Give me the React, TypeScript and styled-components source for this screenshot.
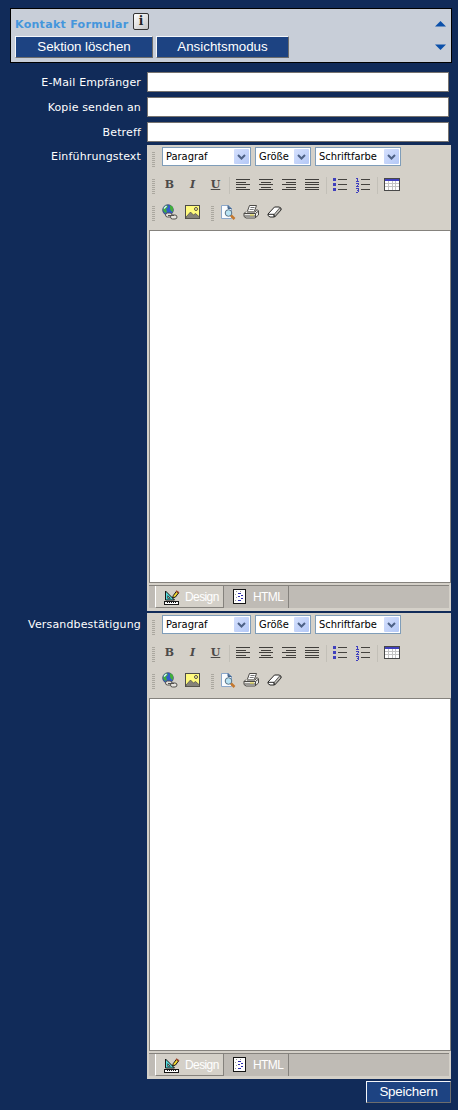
import React from 'react';
import styled, { createGlobalStyle } from 'styled-components';

const Global = createGlobalStyle`
  * { box-sizing: border-box; }
  body { margin: 0; background: #112b59; font-family: 'DejaVu Sans', Verdana, sans-serif; }
`;

const Page = styled.main`
  width: 458px;
  height: 1110px;
  padding: 8px 6px 0 10px;
  background: #112b59;
  overflow: hidden;
`;

const Header = styled.header`
  display: flex;
  justify-content: space-between;
  width: 442px;
  height: 55px;
  padding: 3px 5px 4px 4px;
  border: 1px solid #000;
  background: #c8ced8;
`;

const TitleRow = styled.div`
  display: flex;
  height: 24px;
  align-items: flex-start;
  gap: 4px;
`;

const Title = styled.h1`
  width: 114px;
  margin: 0;
  padding-top: 6px;
  color: #4596dc;
  font-size: 11px;
  line-height: 13px;
  font-weight: bold;
  letter-spacing: 0.3px;
  white-space: nowrap;
`;

const Info = styled.span`
  width: 16px;
  height: 17px;
  margin-top: 1px;
  border: 1px solid #333;
  border-radius: 2px;
  background: linear-gradient(135deg, #fff, #c4c4c4);
  color: #222;
  font: bold 12px/14px 'DejaVu Serif', serif;
  text-align: center;
`;

const Buttons = styled.div`
  display: flex;
  gap: 3px;
`;

const Button = styled.button<{ $width: number; $spacing?: number }>`
  width: ${p => p.$width}px;
  height: 22px;
  padding: 0;
  border: 1px solid;
  border-color: #f4f6fa #6d6d6d #6d6d6d #f4f6fa;
  background: #1d4382;
  color: #fff;
  font: 13.33px/18px 'Liberation Sans', Arial, sans-serif;
  letter-spacing: ${p => p.$spacing ?? 0}px;
  white-space: nowrap;
`;

const Arrows = styled.div`
  display: flex;
  flex-direction: column;
  justify-content: space-between;
  padding: 9px 0 8px;
`;

const Form = styled.form`
  padding-top: 9px;
`;

const Row = styled.div<{ $height: number }>`
  display: flex;
  height: ${p => p.$height}px;
`;

const Label = styled.label<{ $top: number }>`
  width: 131px;
  margin-right: 6px;
  padding-top: ${p => p.$top}px;
  color: #fff;
  font-size: 11px;
  line-height: 13px;
  letter-spacing: 0.15px;
  text-align: right;
  white-space: nowrap;
`;

const Input = styled.input`
  width: 302px;
  height: 20px;
  border: 1px solid #77736f;
  background: #fff;
`;

const Editor = styled.section`
  width: 304px;
  height: 466px;
  padding: 0 0 2px 2px;
  background: #d4d0c8;
`;

const Bar = styled.div<{ $height: number; $top: number }>`
  display: flex;
  align-items: flex-start;
  height: ${p => p.$height}px;
  padding: ${p => p.$top}px 0 0 3px;
`;

const Grip = styled.i<{ $top?: number; $right?: number }>`
  width: 3px;
  height: 15px;
  margin: ${p => p.$top ?? 0}px ${p => p.$right ?? 7}px 0 0;
  background: repeating-linear-gradient(#aaa79f 0 1px, transparent 1px 2px);
`;

const Select = styled.div<{ $width: number; $gap?: number }>`
  display: flex;
  justify-content: space-between;
  width: ${p => p.$width}px;
  height: 19px;
  margin-right: ${p => p.$gap ?? 0}px;
  padding: 1px 1px 1px 3px;
  border: 1px solid #7f9db9;
  background: #fff;
  color: #000;
  font: 11px/16px 'DejaVu Sans Condensed', Tahoma, sans-serif;
  white-space: nowrap;
`;

const Drop = styled.span`
  display: grid;
  place-items: center;
  width: 15px;
  height: 15px;
  border-radius: 1px;
  background: linear-gradient(135deg, #d5e0fd, #b4c8f6);
`;

const Glyph = styled.span<{ $gap: number; $italic?: boolean; $underline?: boolean }>`
  width: 11px;
  height: 14px;
  margin-right: ${p => p.$gap}px;
  padding-top: 1px;
  color: #4c4a48;
  font: ${p => (p.$italic ? 'italic' : 'normal')} bold 11px/14px 'DejaVu Serif', serif;
  text-decoration: ${p => (p.$underline ? 'underline' : 'none')};
  text-align: center;
`;

const Icon = styled.svg<{ $gap?: number; $top?: number }>`
  display: block;
  flex: none;
  margin-top: ${p => p.$top ?? 0}px;
  margin-right: ${p => p.$gap ?? 0}px;
`;

const Rule = styled.i<{ $gap: number }>`
  width: 1px;
  height: 17px;
  margin-right: ${p => p.$gap}px;
  background: #c3c0b8;
`;

const Canvas = styled.div`
  width: 302px;
  height: 353px;
  border: 1px solid #85827d;
  background: #fff;
`;

const Tabs = styled.div`
  display: flex;
  width: 300px;
  height: 23px;
  margin-top: 2px;
  padding-left: 6px;
  border-top: 1px solid #85827d;
  background: #bfbbb5;
`;

const Tab = styled.div<{ $active?: boolean; $width: number }>`
  display: flex;
  width: ${p => p.$width}px;
  height: 22px;
  padding: 3px 0 0 ${p => (p.$active ? 8 : 9)}px;
  border: solid #85827d;
  border-width: 0 1px ${p => (p.$active ? 1 : 0)}px ${p => (p.$active ? 1 : 0)}px;
  border-left-color: #fff;
  background: ${p => (p.$active ? '#d4d0c8' : '#bfbbb5')};
  color: #fff;
  font: 12px/17px 'Liberation Sans', Arial, sans-serif;
  letter-spacing: -0.6px;
`;

const Footer = styled.footer`
  display: flex;
  justify-content: flex-end;
  width: 441px;
`;

function AlignIcon({ kind, gap }: { kind: 'left' | 'center' | 'right' | 'full'; gap: number }) {
  return (
    <Icon width="14" height="12" $gap={gap} $top={2} shapeRendering="crispEdges">
      {[0, 3, 5, 8, 10].map((y, i) => {
        const w = kind === 'full' || i % 2 === 0 ? 14 : 10;
        const x = kind === 'center' ? (14 - w) / 2 : kind === 'right' ? 14 - w : 0;
        return <rect key={y} x={x} y={y} width={w} height="1" fill="#403e3b" />;
      })}
    </Icon>
  );
}

function ListIcon({ numbered, gap }: { numbered?: boolean; gap: number }) {
  return (
    <Icon width="16" height="16" $gap={gap} shapeRendering="crispEdges">
      {[0, 1, 2].map(i => (
        <React.Fragment key={i}>
          {!numbered && <rect x="1" y={1 + i * 5} width="3" height="3" fill="#4040bd" />}
          <rect x="6" y={2 + i * 5} width="9" height="1" fill="#45433f" />
        </React.Fragment>
      ))}
      {numbered && (
        <path d="M1 1.5h1M2.5 1v3M1 4.5h3M1 6.5h2M3.5 6v2M2 8.5h1M1 9.5h3M1 11.5h2M3.5 11v2M2 13.5h1M3.5 13v2M1 15.5h2" fill="none" stroke="#4040bd" />
      )}
    </Icon>
  );
}

function TableIcon() {
  return (
    <Icon width="16" height="13" $top={1} shapeRendering="crispEdges">
      <rect width="16" height="13" fill="#484848" />
      <rect x="1" y="1" width="14" height="2" fill="#4040bd" />
      <rect x="1" y="3" width="14" height="9" fill="#fff" />
      <path d="M1 5.5h14M1 8.5h14M4.5 3v9M8.5 3v9M11.5 3v9" stroke="#c4c4c4" />
    </Icon>
  );
}

function LinkIcon() {
  return (
    <Icon width="16" height="16" $gap={7}>
      <circle cx="6" cy="6" r="5.3" fill="#315bcc" stroke="#3b4770" strokeWidth=".8" />
      <path d="M2 3 5 1 6 3 4 5 5 8 3 9 1 6ZM8 1l3 2v5L9 7 8 5Z" fill="#42ae3c" />
      <path d="M2 4.5 4.5 2" stroke="#d8f4ff" strokeWidth="1.5" />
      <rect x="3.5" y="9" width="6.5" height="4" rx="2" fill="#e6e4df" stroke="#54524e" />
      <rect x="8.5" y="11" width="6.5" height="4" rx="2" fill="#e6e4df" stroke="#54524e" />
      <path d="M6 11.5h6" stroke="#54524e" />
    </Icon>
  );
}

function ImageIcon() {
  return (
    <Icon width="16" height="15" $gap={10} $top={1}>
      <rect x=".5" y=".5" width="14" height="13" fill="#fffa7d" stroke="#4c4b48" />
      <circle cx="11" cy="4" r="1.5" fill="#fff6b0" stroke="#55513b" />
      <path d="m1 12 4.5-5 3 3 2-1.5 4 3.5v1.5H1Z" fill="#858279" stroke="#4e4c45" strokeWidth=".7" />
    </Icon>
  );
}

function PreviewIcon() {
  return (
    <Icon width="16" height="16" $gap={7} $top={1}>
      <path d="M1.5.5h7l3 3v10h-10Z" fill="#fafcff" stroke="#8ba7ca" />
      <path d="M8 .5v3h3.5" fill="#58799f" stroke="#426289" />
      <circle cx="8.5" cy="8" r="3.3" fill="#b9e3f3" stroke="#5a7285" />
      <path d="m11 10.5 3.5 3.5" stroke="#c4782e" strokeWidth="2.5" />
    </Icon>
  );
}

function PrintIcon() {
  return (
    <Icon width="17" height="16" $gap={7}>
      <path d="m4.5 7 2-5.5h7l-2 5.5" fill="#fff" stroke="#4b4945" />
      <path d="M7.5 3.5h4M6.7 5.5h4" stroke="#777" />
      <path d="m3 7.5-2 2v3l2 1.5h9l3.5-3V7l-1.5-1.5L12 8H4" fill="#ecebe7" stroke="#4b4945" />
      <path d="M1 9.5h11.5l3-2.5M1.5 12h11.5M12.5 9.5V14" fill="none" stroke="#4b4945" />
      <path d="M7 11h4" stroke="#e4d538" />
    </Icon>
  );
}

function EraserIcon() {
  return (
    <Icon width="16" height="14" $top={1}>
      <path d="m1 9 6.5-7h5L14 3.5V5l-6.5 7H3L1 10.5Z" fill="#fff" stroke="#272625" />
      <path d="m7 9.5 6-7L14 5l-6.5 7Z" fill="#bdbbb5" stroke="#272625" strokeWidth=".7" />
      <path d="M1 9.3h6V12" fill="none" stroke="#272625" />
    </Icon>
  );
}

function DesignIcon() {
  return (
    <Icon width="16" height="16" $gap={5} $top={1}>
      <path d="M1.5 1v9h9Z" fill="#55ddde" stroke="#151515" />
      <path d="M3.7 5.7v2.6h2.6Z" fill="#d4d0c8" stroke="#151515" strokeWidth=".7" />
      <path d="m8.5 8 .8-2.5 3-4 2.2 1.5-3 4Z" fill="#f2d831" stroke="#151515" />
      <path d="m12 .8 3 2" stroke="#9a442b" strokeWidth="1.5" />
      <rect x=".5" y="11.5" width="14" height="3" fill="#fff" stroke="#151515" />
      <path d="M3.5 11v2M5.5 11v2M7.5 11v2M9.5 11v2M11.5 11v2" stroke="#151515" />
    </Icon>
  );
}

function CodeIcon() {
  return (
    <Icon width="14" height="16" $gap={6} shapeRendering="crispEdges">
      <rect x=".5" y=".5" width="12" height="14" fill="#fff" stroke="#151515" />
      <path d="M5 4.5h3M8 6.5h2M5 7.5h2M8 9.5h2M5 11.5h3" stroke="#2c2cae" />
      <path d="M3 2.5h1M7 2.5h1M2 5.5h1M3 8.5h1M2 11.5h1" stroke="#999" />
    </Icon>
  );
}

function DropDown({ text, width, gap }: { text: string; width: number; gap?: number }) {
  return (
    <Select $width={width} $gap={gap}>
      {text}
      <Drop>
        <svg width="9" height="6"><path d="m1 1 3.5 3.5L8 1" fill="none" stroke="#4d6185" strokeWidth="2" /></svg>
      </Drop>
    </Select>
  );
}

function RichEditor() {
  return (
    <Editor>
      <Bar $height={31} $top={2}>
        <Grip $top={5} />
        <DropDown text="Paragraf" width={89} gap={4} />
        <DropDown text="Größe" width={56} gap={4} />
        <DropDown text="Schriftfarbe" width={86} />
      </Bar>
      <Bar $height={28} $top={1}>
        <Grip $top={2} $right={9} />
        <Glyph $gap={12}>B</Glyph>
        <Glyph $gap={12} $italic>I</Glyph>
        <Glyph $gap={8} $underline>U</Glyph>
        <Rule $gap={6} />
        <AlignIcon kind="left" gap={9} />
        <AlignIcon kind="center" gap={9} />
        <AlignIcon kind="right" gap={9} />
        <AlignIcon kind="full" gap={7} />
        <Rule $gap={5} />
        <ListIcon gap={7} />
        <ListIcon numbered gap={6} />
        <Rule $gap={6} />
        <TableIcon />
      </Bar>
      <Bar $height={26} $top={0}>
        <Grip $top={2} $right={7} />
        <LinkIcon />
        <ImageIcon />
        <Grip $top={2} $right={6} />
        <PreviewIcon />
        <PrintIcon />
        <EraserIcon />
      </Bar>
      <Canvas />
      <Tabs>
        <Tab $active $width={69}><DesignIcon />Design</Tab>
        <Tab $width={65}><CodeIcon />HTML</Tab>
      </Tabs>
    </Editor>
  );
}

export default function App() {
  return (
    <Page>
      <Global />
      <Header>
        <div>
          <TitleRow><Title>Kontakt Formular</Title><Info>i</Info></TitleRow>
          <Buttons>
            <Button $width={138} $spacing={-0.05}>Sektion löschen</Button>
            <Button $width={133}>Ansichtsmodus</Button>
          </Buttons>
        </div>
        <Arrows>
          <svg width="11" height="6"><path d="M0 5.5 5.5 0 11 5.5Z" fill="#0b50aa" /></svg>
          <svg width="11" height="6"><path d="M0 .5h11L5.5 6Z" fill="#0b50aa" /></svg>
        </Arrows>
      </Header>
      <Form>
        <Row $height={25}><Label $top={4}>E-Mail Empfänger</Label><Input /></Row>
        <Row $height={25}><Label $top={4}>Kopie senden an</Label><Input /></Row>
        <Row $height={23}><Label $top={4}>Betreff</Label><Input /></Row>
        <Row $height={468}><Label $top={5}>Einführungstext</Label><RichEditor /></Row>
        <Row $height={468}><Label $top={5}>Versandbestätigung</Label><RichEditor /></Row>
      </Form>
      <Footer><Button type="button" $width={85} $spacing={-0.2}>Speichern</Button></Footer>
    </Page>
  );
}
